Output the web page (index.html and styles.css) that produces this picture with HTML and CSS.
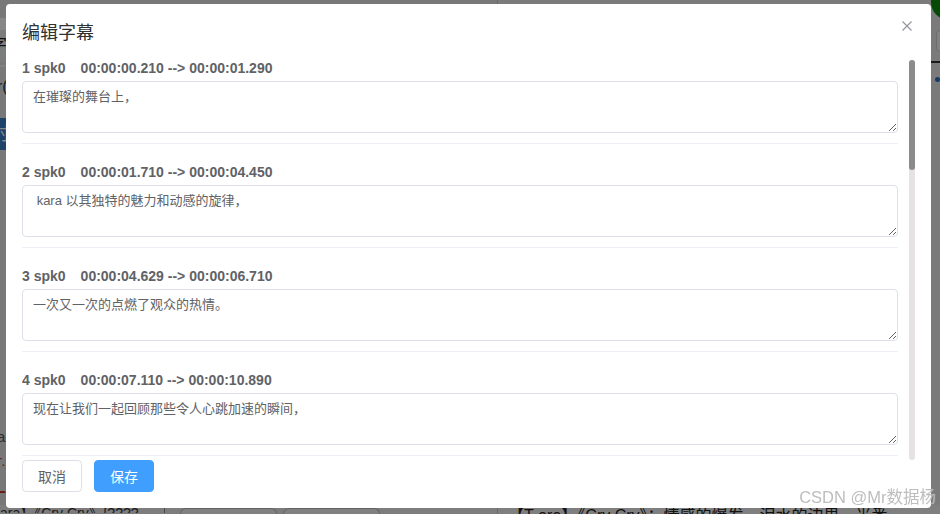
FILE: index.html
```html
<!DOCTYPE html>
<html lang="zh">
<head>
<meta charset="utf-8">
<title>编辑字幕</title>
<link rel="stylesheet" href="styles.css">
</head>
<body>
<div class="page">
  <div class="page-left">
    <div class="bg-tabbar"></div>
    <div class="bg-heading"><span class="bg-clip">字</span></div>
    <div class="bg-input"><span class="bg-clip">r(</span></div>
    <div class="bg-button"><span class="bg-clip">时</span></div>
    <div class="bg-fill"></div>
    <div class="bg-row"><span class="bg-clip">ar</span></div>
    <div class="bg-row bg-red"><span class="bg-clip">r.</span></div>
    <div class="bg-row bg-red bg-under"><span class="bg-clip">_[</span></div>
    <div class="bg-bottom">
      <span class="bg-bottom-text">ara】《Cry Cry》{????</span>
      <span class="bg-chip"></span>
      <span class="bg-chip bg-chip-2"></span>
    </div>
  </div>
  <div class="page-right">
    <div class="bg-top"><span class="bg-avatar"></span></div>
    <div class="bg-search-row"><span class="bg-search"></span></div>
    <div class="bg-list"><span class="bg-dot"></span></div>
    <div class="bg-fill"></div>
    <div class="bg-bottom-right">【T-ara】《Cry Cry》：情感的爆发，泪水的边界，光番</div>
  </div>
</div>

<div class="mask"></div>

<div class="dialog">
  <header class="dialog-header">
    <span class="dialog-title">编辑字幕</span>
    <button class="dialog-close" aria-label="关闭">
      <svg width="10" height="10" viewBox="0 0 10 10"><path d="M0.5 0.5 L9.5 9.5 M9.5 0.5 L0.5 9.5" stroke="#909399" stroke-width="1.1" fill="none"/></svg>
    </button>
  </header>

  <div class="dialog-body">
    <div class="sub-list">
      <div class="sub-item">
        <div class="sub-meta"><span>1 spk0</span><span class="sub-time">00:00:00.210 --&gt; 00:00:01.290</span></div>
        <textarea class="sub-text">在璀璨的舞台上，</textarea>
      </div>
      <div class="sub-item">
        <div class="sub-meta"><span>2 spk0</span><span class="sub-time">00:00:01.710 --&gt; 00:00:04.450</span></div>
        <textarea class="sub-text"> kara 以其独特的魅力和动感的旋律，</textarea>
      </div>
      <div class="sub-item">
        <div class="sub-meta"><span>3 spk0</span><span class="sub-time">00:00:04.629 --&gt; 00:00:06.710</span></div>
        <textarea class="sub-text">一次又一次的点燃了观众的热情。</textarea>
      </div>
      <div class="sub-item">
        <div class="sub-meta"><span>4 spk0</span><span class="sub-time">00:00:07.110 --&gt; 00:00:10.890</span></div>
        <textarea class="sub-text">现在让我们一起回顾那些令人心跳加速的瞬间，</textarea>
      </div>
    </div>
    <div class="scrollbar"><div class="scrollbar-thumb"></div></div>
  </div>

  <footer class="dialog-footer">
    <button class="btn">取消</button>
    <button class="btn btn-primary">保存</button>
  </footer>
</div>

<div class="watermark">CSDN @Mr数据杨</div>
</body>
</html>
```

FILE: styles.css
```css
* { box-sizing: border-box; }

html, body {
  margin: 0;
  padding: 0;
  width: 940px;
  height: 514px;
  overflow: hidden;
}

body {
  font-family: "Liberation Sans", "Noto Sans CJK SC", Arial, sans-serif;
  background: #e2e2e2;
  position: relative;
}

/* ---------- background page (mostly covered by the dialog) ---------- */
.page {
  display: grid;
  grid-template-columns: 497px 1fr;
  height: 514px;
}

.page-left {
  display: flex;
  flex-direction: column;
  padding-top: 18px;
}

.bg-clip {
  display: block;
  width: 6px;
  overflow: hidden;
  white-space: nowrap;
}

.bg-tabbar {
  height: 12px;
  background: #ffffff;
}

.bg-heading {
  height: 32px;
  padding-top: 6px;
  font-size: 16px;
  line-height: 18px;
  color: #222;
  background: #eaeaea;
}

.bg-heading .bg-clip { text-indent: -9px; }

.bg-input {
  height: 50px;
  margin-top: 3px;
  border-top: 2px solid #f4f4f4;
  padding-top: 12px;
  font-size: 16px;
  line-height: 16px;
  color: #333;
}

.bg-input .bg-clip { text-indent: -3px; }

.bg-button {
  height: 32px;
  margin-top: 3px;
  width: 120px;
  background: #3c7fc4;
  color: #fff;
  font-size: 18px;
  line-height: 32px;
}

.bg-button .bg-clip { text-indent: -8px; }

.bg-fill { flex: 1; }

.bg-row {
  height: 24px;
  font-size: 15px;
  line-height: 24px;
  color: #555;
}

.bg-row .bg-clip { text-indent: -3px; }

.bg-red { color: #c0392b; }
.bg-under { text-decoration: underline; margin-bottom: 8px; }

.bg-bottom {
  display: flex;
  align-items: flex-start;
  height: 9px;
  background: #ececec;
}

.bg-bottom-text {
  width: 165px;
  height: 9px;
  font-size: 14px;
  line-height: 18px;
  margin-top: -1px;
  color: #333;
  border-right: 1px solid #888;
  white-space: nowrap;
  overflow: hidden;
}

.bg-chip {
  width: 97px;
  height: 8px;
  margin: 3px 0 0 15px;
  border: 1px solid #bbb;
  border-bottom: none;
  border-radius: 6px 6px 0 0;
  background: #f4f4f4;
}

.bg-chip-2 { margin-left: 6px; }

.page-right {
  display: flex;
  flex-direction: column;
  background: #e8e8e8;
  border-left: 1px solid #c9c9c9;
}

.bg-top {
  display: flex;
  justify-content: flex-end;
  height: 30px;
}

.bg-avatar {
  width: 36px;
  height: 36px;
  margin-top: -16px;
  margin-right: -27px;
  border-radius: 50%;
  background: #0a8f0a;
}

.bg-search-row {
  display: flex;
  justify-content: flex-end;
  height: 33px;
  border-bottom: 2px solid #333;
}

.bg-search {
  width: 40px;
  height: 22px;
  margin-right: -36px;
  border: 1px solid #ccc;
  border-radius: 4px;
  background: #f6f6f6;
}

.bg-list {
  display: flex;
  justify-content: flex-end;
  padding-top: 14px;
}

.bg-dot {
  width: 5px;
  height: 5px;
  border-radius: 50%;
  background: #2d6fc0;
}

.bg-bottom-right {
  height: 9px;
  padding-left: 10px;
  font-size: 16px;
  line-height: 22px;
  color: #222;
  white-space: nowrap;
  overflow: hidden;
  background: #f0f0f0;
}

.mask {
  position: fixed;
  inset: 0;
  background: rgba(0, 0, 0, 0.47);
}

/* ---------- dialog ---------- */
.dialog {
  position: absolute;
  left: 6px;
  top: 4px;
  width: 925px;
  height: 504px;
  background: #ffffff;
  border-radius: 4px;
  padding: 0 16px 16px 16px;
  display: flex;
  flex-direction: column;
}

.dialog-header {
  height: 56px;
  padding-top: 15px;
  flex: none;
}

.dialog-title {
  display: block;
  font-family: "Noto Sans CJK SC", "Liberation Sans", sans-serif;
  font-size: 18px;
  line-height: 24px;
  color: #303133;
}

.dialog-close {
  position: absolute;
  top: 17px;
  right: 19px;
  width: 10px;
  height: 10px;
  padding: 0;
  border: none;
  background: transparent;
  display: flex;
}

.dialog-body {
  display: flex;
  height: 400px;
  flex: none;
}

.sub-list {
  flex: 1;
  min-width: 0;
  overflow: hidden;
  margin-right: 11px;
}

.scrollbar {
  width: 6px;
  height: 400px;
  background: #e6e2e2;
  border-radius: 3px;
  flex: none;
}

.scrollbar-thumb {
  height: 110px;
  background: #8b8b8b;
  border-radius: 3px;
}

.sub-item {
  padding-bottom: 10px;
  border-bottom: 1px solid #ebeef5;
  margin-bottom: 20px;
}

.sub-item:last-child {
  margin-bottom: 0;
}

.sub-meta {
  font-family: "Liberation Sans", Arial, sans-serif;
  font-weight: bold;
  font-size: 14px;
  line-height: 16px;
  color: #606266;
  margin-bottom: 5px;
  white-space: nowrap;
}

.sub-time {
  margin-left: 15px;
}

.sub-text {
  display: block;
  width: 100%;
  height: 52px;
  padding: 5px 10px;
  margin: 0;
  border: 1px solid #dcdfe6;
  border-radius: 4px;
  font-family: "Liberation Sans", "Noto Sans CJK SC", sans-serif;
  font-size: 13px;
  line-height: 19.5px;
  color: #606266;
  background: #fff;
  resize: vertical;
  outline: none;
}

.dialog-footer {
  display: flex;
  gap: 12px;
  flex: none;
}

.btn {
  width: 60px;
  height: 32px;
  padding: 0;
  border: 1px solid #dcdfe6;
  border-radius: 4px;
  background: #fff;
  color: #606266;
  font-family: "Noto Sans CJK SC", "Liberation Sans", sans-serif;
  font-size: 14px;
  line-height: 30px;
}

.btn-primary {
  background: #409eff;
  border-color: #409eff;
  color: #fff;
}

.watermark {
  position: absolute;
  right: 4px;
  bottom: 7px;
  font-family: "Liberation Sans", "Noto Sans CJK SC", sans-serif;
  font-size: 16.5px;
  line-height: 20px;
  color: rgba(178, 178, 178, 0.85);
  text-shadow: 0 0 1px rgba(255, 255, 255, 0.5);
  white-space: nowrap;
}
```
